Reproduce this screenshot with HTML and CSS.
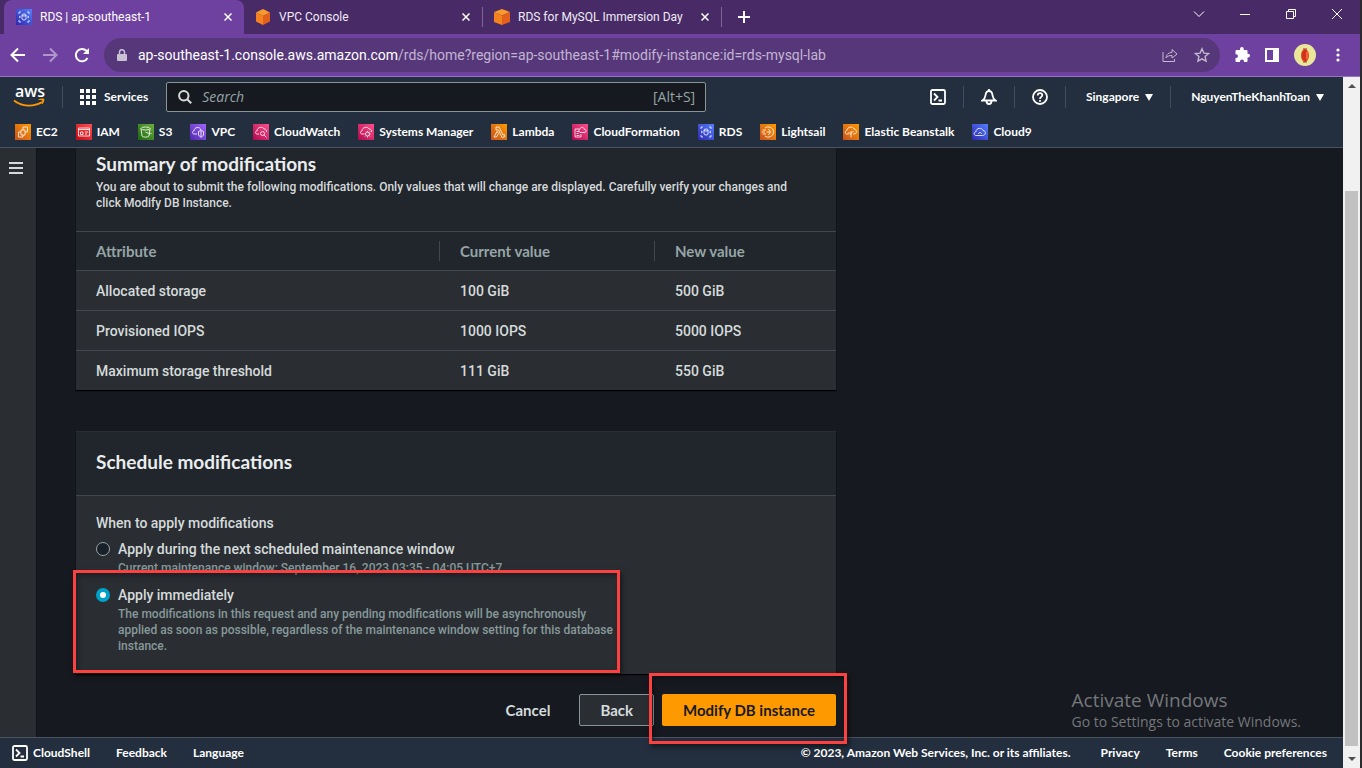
FILE: index.html
```html
<!DOCTYPE html>
<html lang="en">
<head>
<meta charset="utf-8">
<title>RDS | ap-southeast-1</title>
<link rel="stylesheet" href="styles.css">
</head>
<body>
<div class="window">
  <header class="browser">
    <div class="tabstrip">
      <div class="tab tab-active">
        <svg class="tile blue" viewBox="0 0 16 16"><path d="M3 5V3h2M11 3h2v2M13 11v2h-2M5 13H3v-2M3 7l1.500 1L3 9M13 7l-1.500 1L13 9"/><ellipse cx="8" cy="6" rx="2" ry="1"/><path d="M6 6v4c0 1.300 4 1.300 4 0V6"/></svg>
        <span class="tab-title">RDS | ap-southeast-1</span>
        <button class="tab-close" aria-label="Close tab"><svg viewBox="0 0 8 8"><path d="M.5.5l7 7M7.500.5l-7 7"/></svg></button>
      </div>
      <div class="tab">
        <svg class="cube" viewBox="0 0 16 16"><path fill="#fb9a2c" d="M8 0l7 3.500L8 7 1 3.500z"/><path fill="#f58220" d="M1 3.500L8 7v9l-7-3.500z"/><path fill="#e2601b" d="M15 3.500L8 7v9l7-3.500z"/></svg>
        <span class="tab-title">VPC Console</span>
        <button class="tab-close" aria-label="Close tab"><svg viewBox="0 0 8 8"><path d="M.5.5l7 7M7.500.5l-7 7"/></svg></button>
      </div>
      <div class="tab tab-rule">
        <svg class="cube" viewBox="0 0 16 16"><path fill="#fb9a2c" d="M8 0l8 3-8 3.500L0 3z"/><path fill="#f58220" d="M0 3l8 3.500V16l-8-3z"/><path fill="#e2601b" d="M16 3L8 6.500V16l8-3z"/></svg>
        <span class="tab-title">RDS for MySQL Immersion Day</span>
        <button class="tab-close" aria-label="Close tab"><svg viewBox="0 0 8 8"><path d="M.5.5l7 7M7.500.5l-7 7"/></svg></button>
      </div>
      <button class="new-tab" aria-label="New tab"><svg viewBox="0 0 12 12"><path d="M6 0v12M0 6h12"/></svg></button>
      <div class="window-buttons">
        <button aria-label="Search tabs"><svg viewBox="0 0 12 12"><path d="M1 3.500l5 5 5-5"/></svg></button>
        <button aria-label="Minimize"><svg viewBox="0 0 12 12"><path d="M1 6.500h10"/></svg></button>
        <button aria-label="Restore"><svg viewBox="0 0 12 12"><path d="M1.500 3.500h7v7h-7zM3.500 3.500v-2h7v7h-2"/></svg></button>
        <button aria-label="Close"><svg viewBox="0 0 12 12"><path d="M1 1l10 10M11 1L1 11"/></svg></button>
      </div>
    </div>
    <div class="toolbar">
      <button class="nav-btn" aria-label="Back"><svg viewBox="0 0 16 16"><path d="M15 8H2M8 1.500L1.500 8 8 14.500"/></svg></button>
      <button class="nav-btn dim" aria-label="Forward"><svg viewBox="0 0 16 16"><path d="M1 8h13M8 1.500L14.500 8 8 14.500"/></svg></button>
      <button class="nav-btn" aria-label="Reload"><svg viewBox="0 0 16 16"><path d="M13.500 11A6.200 6.200 0 1 1 12.500 3.800L14 5.300"/><path class="solid" d="M15 1v6H9z"/></svg></button>
      <div class="address">
        <svg class="lock" viewBox="0 0 10 12"><path fill="#c9c1d4" d="M1 5h8a1 1 0 0 1 1 1v5a1 1 0 0 1-1 1H1a1 1 0 0 1-1-1V6a1 1 0 0 1 1-1z"/><path fill="none" stroke="#c9c1d4" stroke-width="1.500" d="M2.500 5.500V3.200a2.500 2.500 0 0 1 5 0v2.300"/></svg>
        <span class="url"><b>ap-southeast-1.console.aws.amazon.com</b>/rds/home?region=ap-southeast-1#modify-instance:id=rds-mysql-lab</span>
        <button class="addr-btn" aria-label="Share"><svg viewBox="0 0 16 16"><path d="M1 5v9.500h11.500V12M4 11c.5-4 3-5.500 6-5.500V2.500L15 7l-5 4V8.500c-3 0-4.500.5-6 2.500z"/></svg></button>
        <button class="addr-btn" aria-label="Bookmark"><svg viewBox="0 0 16 16"><path stroke-width="1.400" d="M8 1.800l1.900 4.300 4.700.4-3.500 3.100 1 4.600L8 11.800l-4.100 2.400 1-4.600L1.400 6.500l4.700-.4z"/></svg></button>
      </div>
      <div class="extensions">
        <button aria-label="Extensions"><svg viewBox="0 0 16 16"><path fill="#fff" d="M6 1.900a1.900 1.900 0 0 1 3.800 0V3h2.700c.6 0 1 .4 1 1v2.700h.6a1.900 1.900 0 0 1 0 3.800h-.6V14c0 .6-.4 1-1 1H10v-.6a2 2 0 0 0-4 0v.6H2.500c-.6 0-1-.4-1-1v-3h.6a1.900 1.900 0 0 0 0-3.800h-.6V4c0-.6.4-1 1-1H6z"/></svg></button>
        <button aria-label="Side panel"><svg viewBox="0 0 16 16"><path fill="#fff" fill-rule="evenodd" d="M1 1h14v14H1zM3 3v10h6V3z"/></svg></button>
        <button class="avatar" aria-label="Profile"><svg viewBox="0 0 22 22"><circle cx="11" cy="11" r="11" fill="#e8e79a"/><ellipse cx="11" cy="11.500" rx="4" ry="6.500" fill="#e8401d"/><path d="M9 7.500v8M11 6v11" stroke="#b52a18"/><path d="M13 8v7" stroke="#ff8d4a"/><path d="M9 5h4M9 18h4" stroke="#a4352c"/></svg></button>
        <button aria-label="Menu"><svg viewBox="0 0 16 16"><g fill="#fff"><circle cx="8" cy="3" r="1.600"/><circle cx="8" cy="8" r="1.600"/><circle cx="8" cy="13" r="1.600"/></g></svg></button>
      </div>
    </div>
  </header>

  <div class="viewport">
    <div class="console">
      <nav class="aws-nav">
        <div class="nav-row">
          <a class="aws-logo" href="#" aria-label="AWS home"><svg viewBox="0 0 32 22"><text x="1" y="11">aws</text><path fill="none" stroke="#f90" stroke-width="1.800" d="M0 14.500c8 6.500 20 6.500 28 1.500"/><path fill="#f90" d="M24.500 13.500c2-1.200 5-1.200 5.600-.5.600.8-.2 3.800-1.900 5.300l-.7-.3c.6-1.500 1-3.200.6-3.600-.5-.5-2-.4-3.600-.2z"/></svg></a>
          <span class="rule"></span>
          <button class="services"><svg viewBox="0 0 16 16"><path d="M0 0h4v4H0zM6 0h4v4H6zM12 0h4v4h-4zM0 6h4v4H0zM6 6h4v4H6zM12 6h4v4h-4zM0 12h4v4H0zM6 12h4v4H6zM12 12h4v4h-4z"/></svg>Services</button>
          <label class="search">
            <svg viewBox="0 0 14 14"><circle cx="5.800" cy="5.800" r="4.700"/><path d="M9.200 9.200l4 4"/></svg>
            <input type="search" placeholder="Search" aria-label="Search">
            <span>[Alt+S]</span>
          </label>
          <div class="nav-right">
            <button aria-label="CloudShell"><svg class="icon" viewBox="0 0 16 16"><rect x="1" y="1" width="14" height="14" rx="1.500"/><path d="M4 4.500L7.500 8 4 11.500M8.500 11.500H12"/></svg></button>
            <span class="rule"></span>
            <button aria-label="Notifications"><svg class="icon" viewBox="0 0 16 16"><path d="M1.500 11.500C4 10 4 8.500 4.500 6c.3-2 1.500-4 3.500-4s3.200 2 3.500 4c.5 2.500.5 4 3 5.500zM8 2V0M5.500 12c0 4 5 4 5 0"/></svg></button>
            <span class="rule"></span>
            <button aria-label="Help"><svg class="icon" viewBox="0 0 16 16"><circle cx="8" cy="8" r="7"/><path d="M5.700 6.500c0-3.400 4.800-3 4.600-.2C10.200 8 8 7.800 8 10M8 11v1.800"/></svg></button>
            <span class="rule"></span>
            <button class="menu">Singapore<i class="caret"></i></button>
            <span class="rule"></span>
            <button class="menu">NguyenTheKhanhToan<i class="caret"></i></button>
          </div>
        </div>
        <div class="favorites">
          <a href="#"><svg class="tile orange" viewBox="0 0 16 16"><path d="M6 6h4v5H6zM6 8H3.500v5H8v-2M8 6V4M10 8h2.500V3H8v1"/></svg>EC2</a>
          <a href="#"><svg class="tile red" viewBox="0 0 16 16"><path d="M2.500 4h11v8h-11zM2.500 5.500h11M4.500 8h2.500v2.500H4.500zM9 8h3M9 10h2"/></svg>IAM</a>
          <a href="#"><svg class="tile green" viewBox="0 0 16 16"><ellipse cx="7.500" cy="4.500" rx="4.500" ry="1.500"/><path d="M3 4.500l1 7.500c1 1.500 6 1.500 7 0l1-7.500M7.500 8c2 1.200 5 2 6 1.500"/></svg>S3</a>
          <a href="#"><svg class="tile purple" viewBox="0 0 16 16"><path d="M7 10H4C2 10 2 7 4 7c0-4 6-5 7-1M8.500 7.500l2.500-1 2.500 1V11L11 13.500 8.500 11zM11 7v6"/></svg>VPC</a>
          <a href="#"><svg class="tile pink" viewBox="0 0 16 16"><path d="M6 10H4C2 10 2 7 4 7c0-4 6-5 7-2 2 0 3 1.500 2.500 3"/><circle cx="9.500" cy="9.500" r="2"/><path d="M11 11l2.500 2.500"/></svg>CloudWatch</a>
          <a href="#"><svg class="tile pink" viewBox="0 0 16 16"><path d="M6 10H4C2 10 2 7 4 7c0-4 6-5 7-2 2 0 3 1.500 2.500 3"/><circle cx="9.500" cy="10" r="2"/><path d="M9.500 7v1M9.500 12v1.500M6.500 10h1M11.500 10h1M11 8.500l1-1M8 11.500l-1 1M11 11.500l1 1"/></svg>Systems Manager</a>
          <a href="#"><svg class="tile orange" viewBox="0 0 16 16"><path d="M5 3h3l4 8 1.500-.5.5 2-3 1L7.500 6H5zM6 7.500L3 13h2.500l2-3.500z"/></svg>Lambda</a>
          <a href="#"><svg class="tile pink" viewBox="0 0 16 16"><path d="M7 5H3v8h6v-3M4.500 7.500H7M4.500 9.500h2M4.500 11.500h3M8 8.500h5c2-1 1-3-.5-3C12 3 8.500 2.500 8 5c-1.500 0-1.500 3 0 3.500"/></svg>CloudFormation</a>
          <a href="#"><svg class="tile blue" viewBox="0 0 16 16"><path d="M3 5V3h2M11 3h2v2M13 11v2h-2M5 13H3v-2M3 7l1.500 1L3 9M13 7l-1.500 1L13 9"/><ellipse cx="8" cy="6" rx="2" ry="1"/><path d="M6 6v4c0 1.300 4 1.300 4 0V6"/></svg>RDS</a>
          <a href="#"><svg class="tile orange" viewBox="0 0 16 16"><path d="M5 4c3-2.500 8.500-.5 8.500 4S8 14.500 5 12M2.500 6H6M1.500 8H5M2.500 10H6M8 5.500c3 0 3 5 0 5M6.500 8H10"/></svg>Lightsail</a>
          <a href="#"><svg class="tile orange" viewBox="0 0 16 16"><path d="M6 10H4C1.500 10 2 6.500 4 6.500c0-4 6-4.500 7-1.500 3 0 3.500 5 0 5h-1M8 13.500V7M8 10.500L5.500 8M8 9.500L10.500 7"/></svg>Elastic Beanstalk</a>
          <a href="#"><svg class="tile blue" viewBox="0 0 16 16"><path d="M5 11.500H4c-2.500 0-2.500-3.500 0-3.800 0-4 6-4.500 7-1.200 3.500.5 3 5-.5 5zM6.500 10c0-2 3-2 3 0"/></svg>Cloud9</a>
        </div>
      </nav>

      <div class="workspace">
        <aside class="side-rail"><button aria-label="Open navigation"><svg viewBox="0 0 14 12"><path d="M0 1h14M0 6h14M0 11h14"/></svg></button></aside>
        <main class="content">
          <section class="card">
            <div class="card-head summary-head">
              <h2>Summary of modifications</h2>
              <p>You are about to submit the following modifications. Only values that will change are displayed. Carefully verify your changes and click Modify DB Instance.</p>
            </div>
            <table>
              <colgroup><col class="col-attr"><col class="col-cur"><col></colgroup>
              <thead><tr><th scope="col"><span>Attribute</span></th><th scope="col"><span>Current value</span></th><th scope="col"><span>New value</span></th></tr></thead>
              <tbody>
                <tr><td>Allocated storage</td><td>100 GiB</td><td>500 GiB</td></tr>
                <tr><td>Provisioned IOPS</td><td>1000 IOPS</td><td>5000 IOPS</td></tr>
                <tr><td>Maximum storage threshold</td><td>111 GiB</td><td>550 GiB</td></tr>
              </tbody>
            </table>
          </section>
          <section class="card schedule">
            <div class="card-head"><h2>Schedule modifications</h2></div>
            <fieldset>
              <legend>When to apply modifications</legend>
              <div class="option">
                <input type="radio" name="when" id="later">
                <label for="later">Apply during the next scheduled maintenance window<small>Current maintenance window: September 16, 2023 03:35 - 04:05 UTC+7</small></label>
              </div>
              <div class="option marked">
                <input type="radio" name="when" id="now" checked>
                <label for="now">Apply immediately<small>The modifications in this request and any pending modifications will be asynchronously applied as soon as possible, regardless of the maintenance window setting for this database instance.</small></label>
              </div>
            </fieldset>
          </section>
          <div class="actions">
            <button class="btn-link">Cancel</button>
            <button class="btn-normal">Back</button>
            <div class="marked"><button class="btn-primary">Modify DB instance</button></div>
          </div>
        </main>
        <div class="watermark"><strong>Activate Windows</strong><span>Go to Settings to activate Windows.</span></div>
      </div>

      <footer class="aws-footer">
        <button><svg class="icon" viewBox="0 0 16 16"><rect x="1" y="1" width="14" height="14" rx="1.500"/><path d="M4 4.500L7.500 8 4 11.500M8.500 11.500H12"/></svg>CloudShell</button>
        <a href="#">Feedback</a>
        <a href="#">Language</a>
        <span class="copyright">© 2023, Amazon Web Services, Inc. or its affiliates.</span>
        <a href="#">Privacy</a>
        <a href="#">Terms</a>
        <a href="#">Cookie preferences</a>
      </footer>
    </div>
    <div class="scrollbar"><i class="arrow-up"></i><div class="track"><div class="thumb"></div></div><i class="arrow-down"></i></div>
  </div>
</div>
</body>
</html>
```

FILE: styles.css
```css
* { box-sizing: border-box; }
html, body { height: 100%; margin: 0; }
body {
  background: #2b2b2d;
  color: #d5dbdb;
  font: 14px/20px Roboto, "Open Sans", sans-serif;
  overflow: hidden;
}
button {
  background: none; border: 0; padding: 0; margin: 0;
  color: inherit; font: inherit; cursor: pointer;
  display: flex; align-items: center;
}
a { color: inherit; text-decoration: none; }
svg { display: block; flex: none; fill: none; stroke-width: 1; }
h2, p { margin: 0; }

.window { height: 100%; padding-right: 2px; display: flex; flex-direction: column; }

/* Browser frame */
.browser { background: #472a66; color: #fff; border-bottom: 1px solid #9a72c4; }
.tabstrip { height: 34px; display: flex; padding-left: 4px; }
.tab { width: 238px; display: flex; align-items: center; padding: 0 8px 0 11px; gap: 8px; font-size: 12px; color: #f0eaf6; }
.tab-active { width: 240px; background: #6e40a0; border-radius: 8px 8px 0 0; color: #fff; padding-left: 12px; }
.tab-rule { width: 240px; border-left: 1px solid #7b6592; border-right: 1px solid #7b6592; height: 20px; align-self: center; }
.tab-title { flex: 1; white-space: nowrap; }
.tab-close svg { width: 8px; height: 8px; stroke: #fff; stroke-width: 1.500; }
.tab-close { padding: 4px; }
.cube { width: 16px; height: 16px; }
.new-tab { padding: 0 16px; }
.new-tab svg { width: 12px; height: 12px; stroke: #fff; stroke-width: 2; }
.window-buttons { margin-left: auto; display: flex; padding-bottom: 6px; }
.window-buttons button { width: 46px; justify-content: center; }
.window-buttons svg { width: 12px; height: 12px; stroke: #fff; }
.toolbar { background: #6e40a0; height: 42px; display: flex; align-items: center; padding: 0 14px 0 10px; gap: 16px; }
.nav-btn svg { width: 16px; height: 16px; stroke: #fff; stroke-width: 2; }
.nav-btn svg .solid { fill: #fff; stroke: none; }
.dim { opacity: .45; }
.address { flex: 1; height: 34px; border-radius: 17px; background: #56387a; display: flex; align-items: center; gap: 16px; padding: 0 10px 0 13px; margin-left: -2px; }
.lock { width: 10px; height: 12px; }
.url { flex: 1; font-size: 14px; color: #c3b4d3; white-space: nowrap; margin-left: -5px; }
.url b { font-weight: 400; color: #fff; }
.addr-btn svg { width: 16px; height: 16px; stroke: #c3b8cf; }
.extensions { display: flex; align-items: center; gap: 14px; margin-left: -2px; }
.extensions svg { width: 16px; height: 16px; }
.extensions .avatar svg { width: 22px; height: 22px; }

/* Console shell */
.viewport { flex: 1; min-height: 0; display: flex; }
.console { flex: 1; min-width: 0; display: flex; flex-direction: column; background: #16191f; }
.aws-nav, .aws-footer { background: #232f3e; color: #fff; font-family: Lato, sans-serif; font-size: 12px; line-height: 16px; font-weight: 700; }
.aws-nav { height: 71px; border-bottom: 1px solid #4a5360; }
.nav-row { height: 40px; display: flex; align-items: center; padding: 0 19px 0 14px; }
.rule { width: 1px; height: 22px; background: #414d5c; }
.aws-logo { margin-right: 16px; }
.aws-logo svg { width: 32px; height: 22px; overflow: visible; }
.aws-logo text { fill: #fff; font: 600 16px "Open Sans", sans-serif; }
.services { gap: 8px; margin: 0 18px 0 17px; }
.services svg { width: 16px; height: 16px; fill: #fff; }
.search { width: 540px; height: 30px; display: flex; align-items: center; gap: 10px; padding: 0 10px 0 11px; border: 1px solid #879596; border-radius: 2px; background: #16191f; color: #95a5a6; font-family: "Open Sans", sans-serif; font-size: 14px; font-weight: 400; }
.search svg { width: 14px; height: 14px; stroke: #d5dbdb; stroke-width: 2; }
.search input { flex: 1; min-width: 0; border: 0; padding: 0; outline: 0; background: none; color: #fff; font: inherit; }
.search input::placeholder { color: #95a5a6; font-style: italic; opacity: 1; }
.nav-right { margin-left: auto; display: flex; align-items: center; gap: 17px; }
.menu { margin-left: 3px; }
.icon { width: 16px; height: 16px; stroke: #fff; stroke-width: 1.800; }
.caret { border: 4px solid transparent; border-top: 7px solid #fff; border-bottom: 0; margin-left: 6px; }
.favorites { display: flex; align-items: center; gap: 18px; padding: 7px 15px 0; }
.favorites a { display: flex; align-items: center; gap: 5px; white-space: nowrap; }
.tile { width: 16px; height: 16px; stroke: #fff; stroke-width: .8; }
.orange { background: linear-gradient(45deg, #c8511b, #f90); }
.red { background: linear-gradient(45deg, #bd0816, #ff5252); }
.green { background: linear-gradient(45deg, #1b660f, #6cae3e); }
.purple { background: linear-gradient(45deg, #4d27a8, #a166ff); }
.pink { background: linear-gradient(45deg, #b0084d, #ff4f8b); }
.blue { background: linear-gradient(45deg, #2e27ad, #527fff); }

.workspace { flex: 1; min-height: 0; display: flex; position: relative; }
.side-rail { width: 37px; background: #2a2e33; border-right: 1px solid #101318; padding: 14px 9px; }
.side-rail svg { width: 14px; height: 12px; stroke: #d5dbdb; stroke-width: 2; }
.content { width: 799px; padding-left: 39px; font-weight: 500; }
.card { background: #2a2e33; box-shadow: 0 1px 1px #000; }
.card-head { background: #21252c; border-bottom: 1px solid #414750; padding: 18px 20px 21px; }
.card-head h2 { font-family: Lato, sans-serif; font-size: 19px; line-height: 24px; font-weight: 700; color: #eaeded; }
.summary-head { padding: 4px 30px 20px 20px; }
.summary-head p { font-size: 12px; line-height: 16px; margin-top: 3px; }
table { width: 100%; border-collapse: collapse; table-layout: fixed; }
.col-attr { width: 364px; }
.col-cur { width: 215px; }
th, td { text-align: left; padding: 1px 20px 0; height: 40px; }
th { background: #21252c; color: #95a5a6; font-family: Lato, sans-serif; font-size: 15px; font-weight: 700; height: 38px; padding: 0; }
th span { display: block; padding: 0 20px; border-right: 1px solid #414750; }
th:last-child span { border-right: 0; }
td { border-top: 1px solid #414750; }
.schedule { margin-top: 41px; border-top: 1px solid #2a2e33; }
fieldset { border: 0; margin: 0; padding: 17px 20px 11px; min-width: 0; }
legend { float: left; width: 100%; padding: 0; margin-bottom: 6px; }
.option { clear: both; display: flex; gap: 8px; padding-bottom: 9px; width: 524px; }
.option input { appearance: none; flex: none; width: 14px; height: 14px; margin: 3px 0 0; border: 1px solid #95a5a6; border-radius: 50%; background: #1a2029; }
.option input:checked { border: 4px solid #00a1c9; background: #fff; }
.option small { display: block; font-size: 12px; line-height: 16px; margin-top: 1px; color: #87999a; }
.actions { display: flex; justify-content: flex-end; gap: 8px; padding-top: 20px; font-family: Lato, sans-serif; font-size: 15px; font-weight: 700; }
.actions button { height: 32px; padding: 0 20px; border: 1px solid transparent; border-radius: 2px; }
.actions .btn-normal { border-color: #879596; background: #2a2e33; }
.actions .btn-primary { background: #f90; color: #16191f; }

/* Red call-outs drawn over the page */
.marked { position: relative; }
.marked::after { content: ""; position: absolute; z-index: 3; border: 3px solid #fd4141; box-shadow: 2px 3px 5px rgba(0, 0, 0, .5), inset 2px 3px 5px rgba(0, 0, 0, .35); pointer-events: none; }
.option.marked::after { inset: -15px 0 -10px -23px; }
.actions .marked::after { inset: -21px -11px -18px -13px; }

.watermark { position: absolute; right: 42px; bottom: 5px; color: #74777b; font-family: "Open Sans", sans-serif; }
.watermark strong { display: block; font-weight: 400; font-size: 19px; line-height: 24px; }
.watermark span { font-size: 14px; line-height: 20px; }

.aws-footer { height: 31px; border-top: 1px solid #4a5360; display: flex; align-items: center; gap: 26px; padding: 0 16px 0 12px; white-space: nowrap; }
.aws-footer button { gap: 5px; }
.copyright { margin-left: auto; margin-right: 4px; }

.scrollbar { width: 17px; background: #f1f1f1; display: flex; flex-direction: column; align-items: center; padding: 7px 0; }
.arrow-up, .arrow-down { border: 4px solid transparent; }
.arrow-up { border-top: 0; border-bottom-color: #505050; }
.arrow-down { border-bottom: 0; border-top-color: #505050; }
.track { flex: 1; width: 13px; padding: 103px 0 11px; }
.thumb { height: 100%; background: #c1c1c1; }
```
